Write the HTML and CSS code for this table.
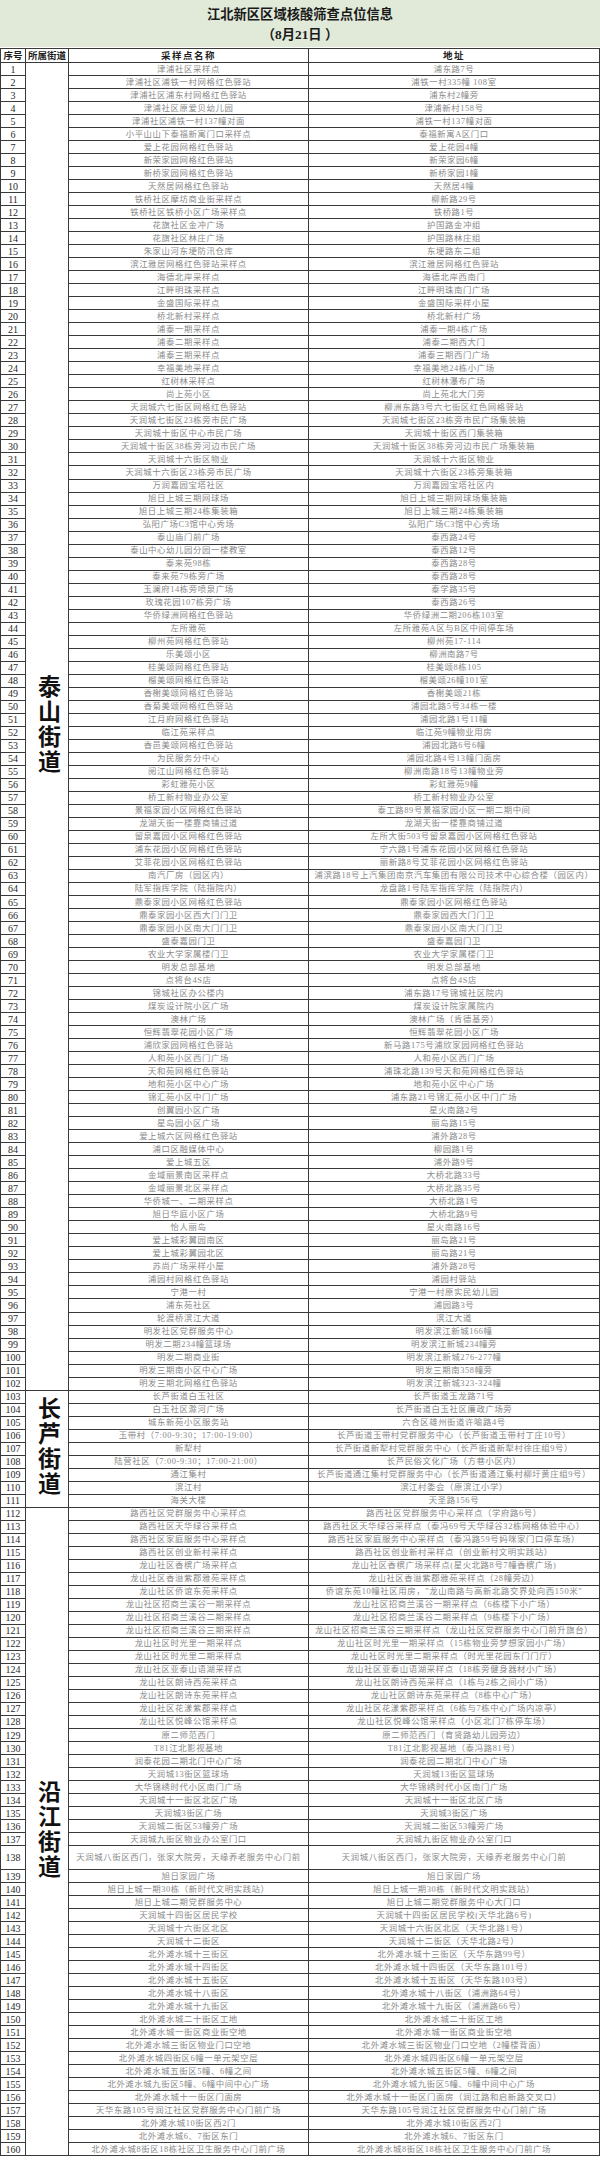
FILE: index.html
```html
<!DOCTYPE html>
<html lang="zh-CN">
<head>
<meta charset="utf-8">
<title>江北新区区域核酸筛查点位信息</title>
<link rel="stylesheet" href="styles.css">
</head>
<body>
<header class="head">
<div>江北新区区域核酸筛查点位信息</div>
<div>（8月21日 ）</div>
</header>
<table class="sheet">
<colgroup><col class="c1"><col class="c2"><col class="c3"><col class="c4"></colgroup>
<thead>
<tr><th>序号</th><th>所属街道</th><th class="wide">采样点名称</th><th class="wide">地址</th></tr>
</thead>
<tbody>
<tr><td>1</td><td class="st" rowspan="102"><span class="vt">泰山街道</span></td><td>津浦社区采样点</td><td>浦东路7号</td></tr>
<tr><td>2</td><td>津浦社区浦铁一村网格红色驿站</td><td>浦铁一村335幢 108室</td></tr>
<tr><td>3</td><td>津浦社区浦东村网格红色驿站</td><td>浦东村2幢旁</td></tr>
<tr><td>4</td><td>津浦社区原爱贝幼儿园</td><td>津浦新村158号</td></tr>
<tr><td>5</td><td>津浦社区浦铁一村137幢对面</td><td>浦铁一村137幢对面</td></tr>
<tr><td>6</td><td>小平山山下泰福新寓门口采样点</td><td>泰福新寓A区门口</td></tr>
<tr><td>7</td><td>爱上花园网格红色驿站</td><td>爱上花园4幢</td></tr>
<tr><td>8</td><td>新荣家园网格红色驿站</td><td>新荣家园6幢</td></tr>
<tr><td>9</td><td>新桥家园网格红色驿站</td><td>新桥家园1幢</td></tr>
<tr><td>10</td><td>天然居网格红色驿站</td><td>天然居4幢</td></tr>
<tr><td>11</td><td>铁桥社区摩坊商业街采样点</td><td>柳新路29号</td></tr>
<tr><td>12</td><td>铁桥社区铁桥小区广场采样点</td><td>铁桥路1号</td></tr>
<tr><td>13</td><td>花旗社区金冲广场</td><td>护国路金冲组</td></tr>
<tr><td>14</td><td>花旗社区林庄广场</td><td>护国路林庄组</td></tr>
<tr><td>15</td><td>朱家山河东埂防汛仓库</td><td>东埂路东二组</td></tr>
<tr><td>16</td><td>滨江雅居网格红色驿站采样点</td><td>滨江雅居网格红色驿站</td></tr>
<tr><td>17</td><td>海德北岸采样点</td><td>海德北岸西南门</td></tr>
<tr><td>18</td><td>江畔明珠采样点</td><td>江畔明珠南门广场</td></tr>
<tr><td>19</td><td>金盛国际采样点</td><td>金盛国际采样小屋</td></tr>
<tr><td>20</td><td>桥北新村采样点</td><td>桥北新村广场</td></tr>
<tr><td>21</td><td>浦泰一期采样点</td><td>浦泰一期4栋广场</td></tr>
<tr><td>22</td><td>浦泰二期采样点</td><td>浦泰二期西大门</td></tr>
<tr><td>23</td><td>浦泰三期采样点</td><td>浦泰三期西门广场</td></tr>
<tr><td>24</td><td>幸福美地采样点</td><td>幸福美地24栋小广场</td></tr>
<tr><td>25</td><td>红树林采样点</td><td>红树林瀑布广场</td></tr>
<tr><td>26</td><td>尚上苑小区</td><td>尚上苑北大门旁</td></tr>
<tr><td>27</td><td>天润城六七街区网格红色驿站</td><td>柳洲东路3号六七街区红色网格驿站</td></tr>
<tr><td>28</td><td>天润城七街区23栋旁市民广场</td><td>天润城七街区23栋旁市民广场集装箱</td></tr>
<tr><td>29</td><td>天润城十街区中心市民广场</td><td>天润城十街区西门集装箱</td></tr>
<tr><td>30</td><td>天润城十街区38栋旁河边市民广场</td><td>天润城十街区38栋旁河边市民广场集装箱</td></tr>
<tr><td>31</td><td>天润城十六街区物业</td><td>天润城十六街区物业</td></tr>
<tr><td>32</td><td>天润城十六街区23栋旁市民广场</td><td>天润城十六街区23栋旁集装箱</td></tr>
<tr><td>33</td><td>万润嘉园宝塔社区</td><td>万润嘉园宝塔社区内</td></tr>
<tr><td>34</td><td>旭日上城三期网球场</td><td>旭日上城三期网球场集装箱</td></tr>
<tr><td>35</td><td>旭日上城三期24栋集装箱</td><td>旭日上城三期24栋集装箱</td></tr>
<tr><td>36</td><td>弘阳广场C3馆中心秀场</td><td>弘阳广场C3馆中心秀场</td></tr>
<tr><td>37</td><td>泰山庙门前广场</td><td>泰西路24号</td></tr>
<tr><td>38</td><td>泰山中心幼儿园分园一楼教室</td><td>泰西路12号</td></tr>
<tr><td>39</td><td>泰来苑98栋</td><td>泰西路28号</td></tr>
<tr><td>40</td><td>泰来苑79栋旁广场</td><td>泰西路28号</td></tr>
<tr><td>41</td><td>玉澜府14栋旁喷泉广场</td><td>泰学路35号</td></tr>
<tr><td>42</td><td>玫瑰花园107栋旁广场</td><td>泰西路26号</td></tr>
<tr><td>43</td><td>华侨绿洲网格红色驿站</td><td>华侨绿洲二期206栋103室</td></tr>
<tr><td>44</td><td>左所雅苑</td><td>左所雅苑A区与B区中间停车场</td></tr>
<tr><td>45</td><td>柳州苑网格红色驿站</td><td>柳州苑17-114</td></tr>
<tr><td>46</td><td>乐美颂小区</td><td>柳洲南路7号</td></tr>
<tr><td>47</td><td>桂美颂网格红色驿站</td><td>桂美颂8栋105</td></tr>
<tr><td>48</td><td>榴美颂网格红色驿站</td><td>榴美颂26幢101室</td></tr>
<tr><td>49</td><td>香榭美颂网格红色驿站</td><td>香榭美颂21栋</td></tr>
<tr><td>50</td><td>香菊美颂网格红色驿站</td><td>浦园北路5号34栋一楼</td></tr>
<tr><td>51</td><td>江月府网格红色驿站</td><td>浦园北路1号11幢</td></tr>
<tr><td>52</td><td>临江苑采样点</td><td>临江苑9幢物业用房</td></tr>
<tr><td>53</td><td>香邑美颂网格红色驿站</td><td>浦园北路6号6幢</td></tr>
<tr><td>54</td><td>为民服务分中心</td><td>浦园北路4号13幢门面房</td></tr>
<tr><td>55</td><td>阅江山网格红色驿站</td><td>柳洲南路18号13幢物业旁</td></tr>
<tr><td>56</td><td>彩虹雅苑小区</td><td>彩虹雅苑9幢</td></tr>
<tr><td>57</td><td>桥工新村物业办公室</td><td>桥工新村物业办公室</td></tr>
<tr><td>58</td><td>景福家园小区网格红色驿站</td><td>泰工路89号景福家园小区一期二期中间</td></tr>
<tr><td>59</td><td>龙湖天街一楼靠商铺过道</td><td>龙湖天街一楼靠商铺过道</td></tr>
<tr><td>60</td><td>留泉嘉园小区网格红色驿站</td><td>左所大街503号留泉嘉园小区网格红色驿站</td></tr>
<tr><td>61</td><td>浦东花园小区网格红色驿站</td><td>宁六路1号浦东花园小区网格红色驿站</td></tr>
<tr><td>62</td><td>艾菲花园小区网格红色驿站</td><td>丽新路8号艾菲花园小区网格红色驿站</td></tr>
<tr><td>63</td><td>南汽厂房（园区内）</td><td>浦滨路18号上汽集团南京汽车集团有限公司技术中心综合楼（园区内）</td></tr>
<tr><td>64</td><td>陆军指挥学院（陆指院内）</td><td>龙盘路1号陆军指挥学院（陆指院内）</td></tr>
<tr><td>65</td><td>鼎泰家园小区网格红色驿站</td><td>鼎泰家园小区网格红色驿站</td></tr>
<tr><td>66</td><td>鼎泰家园小区西大门门卫</td><td>鼎泰家园西大门门卫</td></tr>
<tr><td>67</td><td>鼎泰家园小区南大门门卫</td><td>鼎泰家园小区南大门门卫</td></tr>
<tr><td>68</td><td>盛泰嘉园门卫</td><td>盛泰嘉园门卫</td></tr>
<tr><td>69</td><td>农业大学家属楼门卫</td><td>农业大学家属楼门卫</td></tr>
<tr><td>70</td><td>明发总部基地</td><td>明发总部基地</td></tr>
<tr><td>71</td><td>点将台4S店</td><td>点将台4S店</td></tr>
<tr><td>72</td><td>锦城社区办公楼内</td><td>浦东路17号锦城社区院内</td></tr>
<tr><td>73</td><td>煤炭设计院小区广场</td><td>煤炭设计院家属院内</td></tr>
<tr><td>74</td><td>澳林广场</td><td>澳林广场（肯德基旁）</td></tr>
<tr><td>75</td><td>恒辉翡翠花园小区广场</td><td>恒辉翡翠花园小区广场</td></tr>
<tr><td>76</td><td>浦欣家园网格红色驿站</td><td>新马路175号浦欣家园网格红色驿站</td></tr>
<tr><td>77</td><td>人和苑小区西门广场</td><td>人和苑小区西门广场</td></tr>
<tr><td>78</td><td>天和苑网格红色驿站</td><td>浦珠北路139号天和苑网格红色驿站</td></tr>
<tr><td>79</td><td>地和苑小区中心广场</td><td>地和苑小区中心广场</td></tr>
<tr><td>80</td><td>锦汇苑小区中门广场</td><td>浦东路21号锦汇苑小区中门广场</td></tr>
<tr><td>81</td><td>创翼园小区广场</td><td>星火南路2号</td></tr>
<tr><td>82</td><td>星岛园小区广场</td><td>丽岛路15号</td></tr>
<tr><td>83</td><td>爱上城六区网格红色驿站</td><td>浦外路28号</td></tr>
<tr><td>84</td><td>浦口区融媒体中心</td><td>柳园路1号</td></tr>
<tr><td>85</td><td>爱上城五区</td><td>浦外路9号</td></tr>
<tr><td>86</td><td>金域丽景南区采样点</td><td>大桥北路33号</td></tr>
<tr><td>87</td><td>金域丽景北区采样点</td><td>大桥北路35号</td></tr>
<tr><td>88</td><td>华侨城一、二期采样点</td><td>大桥北路1号</td></tr>
<tr><td>89</td><td>旭日华庭小区广场</td><td>大桥北路9号</td></tr>
<tr><td>90</td><td>怡人丽岛</td><td>星火南路16号</td></tr>
<tr><td>91</td><td>爱上城彩翼园南区</td><td>丽岛路21号</td></tr>
<tr><td>92</td><td>爱上城彩翼园北区</td><td>丽岛路21号</td></tr>
<tr><td>93</td><td>苏尚广场采样小屋</td><td>浦外路28号</td></tr>
<tr><td>94</td><td>浦园村网格红色驿站</td><td>浦园村驿站</td></tr>
<tr><td>95</td><td>宁港一村</td><td>宁港一村原实民幼儿园</td></tr>
<tr><td>96</td><td>浦东苑社区</td><td>浦园路3号</td></tr>
<tr><td>97</td><td>轮渡桥滨江大道</td><td>滨江大道</td></tr>
<tr><td>98</td><td>明发社区党群服务中心</td><td>明发滨江新城166幢</td></tr>
<tr><td>99</td><td>明发二期234幢篮球场</td><td>明发滨江新城234幢旁</td></tr>
<tr><td>100</td><td>明发二期商业街</td><td>明发滨江新城276-277幢</td></tr>
<tr><td>101</td><td>明发三期南小区中心广场</td><td>明发三期南358幢旁</td></tr>
<tr><td>102</td><td>明发三期北网格红色驿站</td><td>明发滨江新城323-324幢</td></tr>
<tr><td>103</td><td class="st" rowspan="9"><span class="vt">长芦街道</span></td><td>长芦街道白玉社区</td><td>长芦街道玉龙路71号</td></tr>
<tr><td>104</td><td>白玉社区滁河广场</td><td>长芦街道白玉社区廉政广场旁</td></tr>
<tr><td>105</td><td>城东新苑小区服务站</td><td>六合区雄州街道许喻路4号</td></tr>
<tr><td>106</td><td>玉带村（7:00-9:30；17:00-19:00）</td><td>长芦街道玉带村党群服务中心（长芦街道玉带村丁庄10号）</td></tr>
<tr><td>107</td><td>新犁村</td><td>长芦街道新犁村党群服务中心（长芦街道新犁村徐庄组9号）</td></tr>
<tr><td>108</td><td>陆营社区（7:00-9:30；17:00-21:00）</td><td>长芦民俗文化广场（方巷小区内）</td></tr>
<tr><td>109</td><td>通江集村</td><td>长芦街道通江集村党群服务中心（长芦街道通江集村柳圩黄庄组9号）</td></tr>
<tr><td>110</td><td>滨江村</td><td>滨江村委会（原滨江小学）</td></tr>
<tr><td>111</td><td>海关大楼</td><td>天圣路156号</td></tr>
<tr><td>112</td><td class="st" rowspan="49"><span class="vt">沿江街道</span></td><td>路西社区党群服务中心采样点</td><td>路西社区党群服务中心采样点（学府路6号）</td></tr>
<tr><td>113</td><td>路西社区天华绿谷采样点</td><td>路西社区天华绿谷采样点（泰冯69号天华绿谷32栋网格体验中心）</td></tr>
<tr><td>114</td><td>路西社区家庭服务中心采样点</td><td>路西社区家庭服务中心采样点（泰冯路59号妈咪家门口停车场）</td></tr>
<tr><td>115</td><td>路西社区创业新村采样点</td><td>路西社区创业新村采样点（创业新村文明实践站）</td></tr>
<tr><td>116</td><td>龙山社区香槟广场采样点</td><td>龙山社区香槟广场采样点(星火北路8号7幢香槟广场)</td></tr>
<tr><td>117</td><td>龙山社区香溢紫郡雅苑采样点</td><td>龙山社区香溢紫郡雅苑采样点（28幢旁边）</td></tr>
<tr><td>118</td><td>龙山社区侨谊东苑采样点</td><td>侨谊东苑10幢社区用房，"龙山南路与高新北路交界处向西150米"</td></tr>
<tr><td>119</td><td>龙山社区招商兰溪谷一期采样点</td><td>龙山社区招商兰溪谷一期采样点（6栋楼下小广场）</td></tr>
<tr><td>120</td><td>龙山社区招商兰溪谷二期采样点</td><td>龙山社区招商兰溪谷二期采样点（9栋楼下小广场）</td></tr>
<tr><td>121</td><td>龙山社区招商兰溪谷三期采样点</td><td>龙山社区招商兰溪谷三期采样点（龙山社区党群服务中心门前升旗台）</td></tr>
<tr><td>122</td><td>龙山社区时光里一期采样点</td><td>龙山社区时光里一期采样点（15栋物业旁梦想家园小广场）</td></tr>
<tr><td>123</td><td>龙山社区时光里二期采样点</td><td>龙山社区时光里二期采样点（时光里花园东门门厅）</td></tr>
<tr><td>124</td><td>龙山社区亚泰山语湖采样点</td><td>龙山社区亚泰山语湖采样点（18栋旁健身器材小广场）</td></tr>
<tr><td>125</td><td>龙山社区朗诗西苑采样点</td><td>龙山社区朗诗西苑采样点（1栋与2栋之间小广场）</td></tr>
<tr><td>126</td><td>龙山社区朗诗东苑采样点</td><td>龙山社区朗诗东苑采样点（8栋中心广场）</td></tr>
<tr><td>127</td><td>龙山社区花漾紫郡采样点</td><td>龙山社区花漾紫郡采样点（6栋与7栋中心广场内凉亭）</td></tr>
<tr><td>128</td><td>龙山社区悦峰公馆采样点</td><td>龙山社区悦峰公馆采样点（小区北门7栋停车场）</td></tr>
<tr><td>129</td><td>原二师范西门</td><td>原二师范西门（育贤路幼儿园旁边）</td></tr>
<tr><td>130</td><td>T81江北影视基地</td><td>T81江北影视基地（泰冯路81号）</td></tr>
<tr><td>131</td><td>润泰花园二期北门中心广场</td><td>润泰花园二期北门中心广场</td></tr>
<tr><td>132</td><td>天润城13街区篮球场</td><td>天润城13街区篮球场</td></tr>
<tr><td>133</td><td>大华锦绣时代小区南门广场</td><td>大华锦绣时代小区南门广场</td></tr>
<tr><td>134</td><td>天润城十一街区北区广场</td><td>天润城十一街区北区广场</td></tr>
<tr><td>135</td><td>天润城3街区广场</td><td>天润城3街区广场</td></tr>
<tr><td>136</td><td>天润城二街区53幢旁广场</td><td>天润城二街区53幢旁广场</td></tr>
<tr><td>137</td><td>天润城九街区物业办公室门口</td><td>天润城九街区物业办公室门口</td></tr>
<tr class="tall"><td>138</td><td>天润城八街区西门，张家大院旁，天缘养老服务中心门前</td><td>天润城八街区西门，张家大院旁，天缘养老服务中心门前</td></tr>
<tr><td>139</td><td>旭日家园广场</td><td>旭日家园广场</td></tr>
<tr><td>140</td><td>旭日上城一期30栋（新时代文明实践站）</td><td>旭日上城一期30栋（新时代文明实践站）</td></tr>
<tr><td>141</td><td>旭日上城二期党群服务中心</td><td>旭日上城二期党群服务中心大门口</td></tr>
<tr><td>142</td><td>天润城十四街区居民学校</td><td>天润城十四街区居民学校(天华北路6号)</td></tr>
<tr><td>143</td><td>天润城十六街区北区</td><td>天润城十六街区北区（天华北路1号）</td></tr>
<tr><td>144</td><td>天润城十二街区</td><td>天润城十二街区（天华北路2号）</td></tr>
<tr><td>145</td><td>北外滩水城十三街区</td><td>北外滩水城十三街区（天华东路99号）</td></tr>
<tr><td>146</td><td>北外滩水城十四街区</td><td>北外滩水城十四街区（天华东路101号）</td></tr>
<tr><td>147</td><td>北外滩水城十五街区</td><td>北外滩水城十五街区（天华东路103号）</td></tr>
<tr><td>148</td><td>北外滩水城十八街区</td><td>北外滩水城十八街区（浦洲路64号）</td></tr>
<tr><td>149</td><td>北外滩水城十九街区</td><td>北外滩水城十九街区（浦洲路66号）</td></tr>
<tr><td>150</td><td>北外滩水城二十街区工地</td><td>北外滩水城二十街区工地</td></tr>
<tr><td>151</td><td>北外滩水城一街区商业街空地</td><td>北外滩水城一街区商业街空地</td></tr>
<tr><td>152</td><td>北外滩水城三街区物业门口空地</td><td>北外滩水城三街区物业门口空地（2幢楼背面）</td></tr>
<tr><td>153</td><td>北外滩水城四街区6幢一单元架空层</td><td>北外滩水城四街区6幢一单元架空层</td></tr>
<tr><td>154</td><td>北外滩水城五街区5幢、6幢之间</td><td>北外滩水城五街区5幢、6幢之间</td></tr>
<tr><td>155</td><td>北外滩水城九街区5幢、6幢中间中心广场</td><td>北外滩水城九街区5幢、6幢中间中心广场</td></tr>
<tr><td>156</td><td>北外滩水城十一街区门面房</td><td>北外滩水城十一街区门面房（润江路和启新路交叉口）</td></tr>
<tr><td>157</td><td>天华东路105号润江社区党群服务中心门前广场</td><td>天华东路105号润江社区党群服务中心门前广场</td></tr>
<tr><td>158</td><td>北外滩水城10街区西2门</td><td>北外滩水城10街区西2门</td></tr>
<tr><td>159</td><td>北外滩水城6、7街区东门</td><td>北外滩水城6、7街区东门</td></tr>
<tr><td>160</td><td>北外滩水城8街区18栋社区卫生服务中心门前广场</td><td>北外滩水城8街区18栋社区卫生服务中心门前广场</td></tr>
</tbody>
</table>
</body>
</html>
```
FILE: styles.css
```css
html, body {
  margin: 0;
  padding: 0;
  background: #ffffff;
}
body {
  width: 600px;
  font-family: "Liberation Serif", "Noto Sans CJK SC", serif;
  color: #222;
}
.head {
  background: #e1ead9;
  text-align: center;
  font-weight: bold;
  color: #1a1a1a;
  font-size: 13.3px;
  line-height: 19.5px;
  padding: 5px 0 3px;
  height: 39px;
}
.sheet {
  width: 599px;
  border-collapse: collapse;
  table-layout: fixed;
  margin: 1px 0 0 0;
}
.c1 { width: 25px; }
.c2 { width: 43px; }
.c3 { width: 240px; }
.c4 { width: 291px; }
.sheet th,
.sheet td {
  border: 1px solid #3a3a3a;
  padding: 0;
  text-align: center;
  vertical-align: middle;
  white-space: nowrap;
  overflow: hidden;
}
.sheet thead tr { height: 14px; }
.sheet th {
  font-size: 9.5px;
  line-height: 12px;
  font-weight: bold;
  color: #1e1e1e;
}
.sheet th.wide { letter-spacing: 1.5px; }
.sheet tbody tr { height: 13.03px; }
.sheet tbody tr.tall { height: 24px; }
.sheet td {
  font-size: 8.4px;
  line-height: 11px;
  letter-spacing: 0.6px;
  color: #8a8a8a;
}
.sheet td:first-child {
  font-size: 10px;
  letter-spacing: 0;
  color: #2a2a2a;
}
.sheet td.st {
  color: #111;
}
.vt {
  display: inline-block;
  writing-mode: vertical-rl;
  font-size: 23px;
  line-height: 23px;
  letter-spacing: 2px;
  font-weight: bold;
  color: #111;
}
```
